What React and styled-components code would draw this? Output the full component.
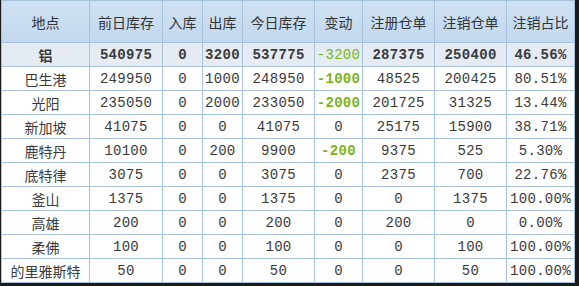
import React from "react";
import styled, { createGlobalStyle } from "styled-components";

const Global = createGlobalStyle`
  html, body { margin: 0; padding: 0; background: #1b1b1b; }
  body { width: 579px; height: 286px; overflow: hidden; }
`;

const Frame = styled.div`
  padding: 0 0 0 1px;
  width: 573px;
`;

const Table = styled.table`
  border-collapse: collapse;
  table-layout: fixed;
  width: 573px;
  background: #ffffff;
  font-family: "Liberation Mono", "Noto Sans CJK SC", monospace;
  font-size: 14px;
  color: #3a3a3a;
`;

const HeadCell = styled.th`
  height: 41px;
  padding: 0;
  font-family: "Noto Sans CJK SC", sans-serif;
  font-weight: 400;
  font-size: 14px;
  color: #333;
  text-align: center;
  background: linear-gradient(#cfe1f2, #c2d8ee);
  border: 1px solid #a8c2dc;
`;

const Row = styled.tr`
  background: ${(p) => (p.$highlight ? "#e4ebf2" : "#ffffff")};
`;

const Cell = styled.td`
  height: 23px;
  padding: 0;
  text-align: center;
  white-space: nowrap;
  border: 1px solid #a8c2dc;
  letter-spacing: ${(p) => (p.$cjk ? "0" : "0.3px")};
  font-family: ${(p) =>
    p.$cjk ? `"Noto Sans CJK SC", sans-serif` : `"Liberation Mono", monospace`};
  font-weight: ${(p) => (p.$bold ? 700 : 400)};
  color: ${(p) => (p.$green ? "#79b51c" : "#3a3a3a")};
`;

const widths = [88, 73, 40, 40, 72, 48, 72, 72, 68];
const heads = ["地点", "前日库存", "入库", "出库", "今日库存", "变动", "注册仓单", "注销仓单", "注销占比"];

const rows = [
  ["铝", "540975", "0", "3200", "537775", "-3200", "287375", "250400", "46.56%"],
  ["巴生港", "249950", "0", "1000", "248950", "-1000", "48525", "200425", "80.51%"],
  ["光阳", "235050", "0", "2000", "233050", "-2000", "201725", "31325", "13.44%"],
  ["新加坡", "41075", "0", "0", "41075", "0", "25175", "15900", "38.71%"],
  ["鹿特丹", "10100", "0", "200", "9900", "-200", "9375", "525", "5.30%"],
  ["底特律", "3075", "0", "0", "3075", "0", "2375", "700", "22.76%"],
  ["釜山", "1375", "0", "0", "1375", "0", "0", "1375", "100.00%"],
  ["高雄", "200", "0", "0", "200", "0", "200", "0", "0.00%"],
  ["柔佛", "100", "0", "0", "100", "0", "0", "100", "100.00%"],
  ["的里雅斯特", "50", "0", "0", "50", "0", "0", "50", "100.00%"],
];

export default function App() {
  return (
    <>
      <Global />
      <Frame>
        <Table>
          <colgroup>
            {widths.map((w, i) => (
              <col key={i} style={{ width: w }} />
            ))}
          </colgroup>
          <thead>
            <tr>
              {heads.map((h) => (
                <HeadCell key={h}>{h}</HeadCell>
              ))}
            </tr>
          </thead>
          <tbody>
            {rows.map((r, ri) => (
              <Row key={ri} $highlight={ri === 0}>
                {r.map((c, ci) => {
                  const green = ci === 5 && c.startsWith("-");
                  const bold = ri === 0 ? ci !== 5 : green;
                  return (
                    <Cell key={ci} $cjk={ci === 0} $bold={bold} $green={green}>
                      {c}
                    </Cell>
                  );
                })}
              </Row>
            ))}
          </tbody>
        </Table>
      </Frame>
    </>
  );
}
